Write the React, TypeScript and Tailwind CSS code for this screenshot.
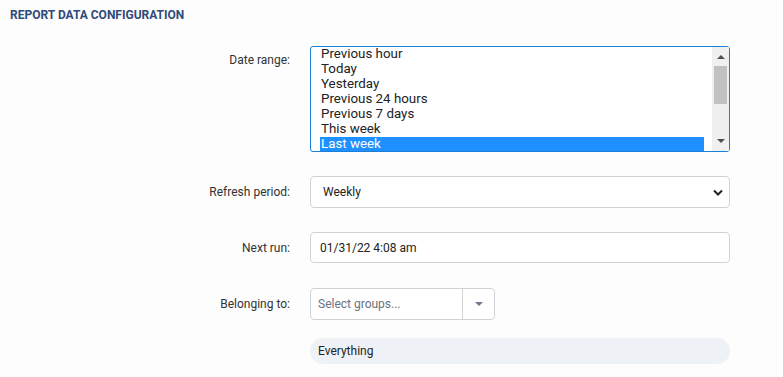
import React from 'react';

const ranges = ['Previous hour', 'Today', 'Yesterday', 'Previous 24 hours', 'Previous 7 days', 'This week', 'Last week'];

function Label({ children, className = '' }: { children: React.ReactNode; className?: string }) {
    return <div className={`w-[310px] shrink-0 pr-[20px] text-right text-[12px] text-[#333] ${className}`}>{children}</div>;
}

export default function App() {
    return (
        <div className="h-[377px] w-[783px] overflow-hidden bg-[#fdfdfd] font-['Roboto',sans-serif]">
            <div className="pl-[10px] pt-[8px] text-[12px] font-bold uppercase leading-[14px] text-[#2f4a7b]">
                Report Data Configuration
            </div>

            <div className="mt-[24px] flex w-[730px]">
                {/* Date range listbox */}
                <Label className="pt-[7px] leading-[14px]">Date range:</Label>
                <div className="flex h-[106px] flex-1 rounded-[3px] border border-[#1a7fd8] bg-white">
                    <div className="flex-1 overflow-hidden pl-[9px] pr-[8px]">
                        {ranges.map((r) => (
                            <div
                                key={r}
                                className={`h-[15px] px-[1px] text-[13.333px] leading-[14px] ${
                                    r === 'Last week' ? 'bg-[#1e90ff] text-white' : 'text-[#222]'
                                }`}
                            >
                                {r}
                            </div>
                        ))}
                    </div>
                    <div className="flex w-[17px] flex-col items-center bg-[#f0f0f0]">
                        <svg width="8" height="5" viewBox="0 0 8 5" className="mt-[7px]">
                            <path d="M0 5 L4 1 L8 5 Z" fill="#505050" />
                        </svg>
                        <div className="mt-[7px] h-[38px] w-[13px] bg-[#c1c1c1]" />
                        <div className="flex-1" />
                        <svg width="8" height="5" viewBox="0 0 8 5" className="mb-[7px]">
                            <path d="M0 0 L8 0 L4 4 Z" fill="#505050" />
                        </svg>
                    </div>
                </div>
            </div>

            <div className="mt-[24px] flex w-[730px] items-center">
                <Label>Refresh period:</Label>
                <div className="flex h-[32px] flex-1 items-center justify-between rounded-[4px] border border-[#cfd3d8] bg-white pl-[12px] pr-[6px]">
                    <span className="text-[12px] text-[#222]">Weekly</span>
                    <svg width="10" height="7" viewBox="0 0 10 7">
                        <path d="M1 1.5 L5 5.5 L9 1.5" fill="none" stroke="#222" strokeWidth="2" />
                    </svg>
                </div>
            </div>

            <div className="mt-[24px] flex w-[730px] items-center">
                <Label>Next run:</Label>
                <div className="flex h-[31px] flex-1 items-center rounded-[4px] border border-[#cfd3d8] bg-white pl-[9px]">
                    <span className="text-[12px] text-[#222]">01/31/22 4:08 am</span>
                </div>
            </div>

            <div className="mt-[25px] flex w-[730px] items-center">
                <Label>Belonging to:</Label>
                <div className="flex h-[32px] w-[185px] items-center rounded-[4px] border border-[#cfd3d8] bg-white">
                    <span className="flex-1 pl-[7px] text-[12px] text-[#6b7280]">Select groups...</span>
                    <div className="flex h-full w-[32px] items-center justify-center border-l border-[#cfd3d8]">
                        <svg width="8" height="5" viewBox="0 0 8 5">
                            <path d="M0 0 L8 0 L4 4 Z" fill="#6b7a8c" />
                        </svg>
                    </div>
                </div>
            </div>

            <div className="mt-[18px] flex w-[730px]">
                <div className="w-[310px] shrink-0" />
                <div className="flex h-[26px] flex-1 items-center rounded-full bg-[#eef1f6] pl-[8px] text-[12px] text-[#222]">
                    Everything
                </div>
            </div>
        </div>
    );
}
